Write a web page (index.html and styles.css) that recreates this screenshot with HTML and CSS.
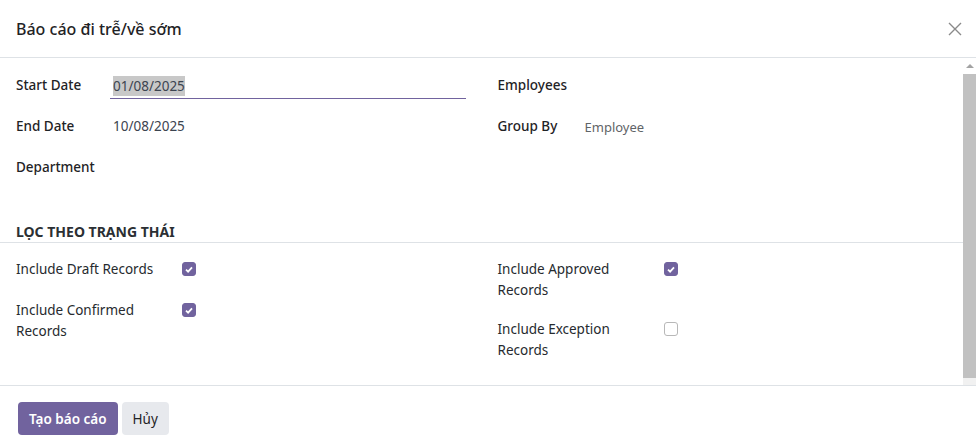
FILE: index.html
```html
<!DOCTYPE html>
<html lang="vi">
<head>
<meta charset="utf-8">
<title>Báo cáo đi trễ/về sớm</title>
<link rel="stylesheet" href="styles.css">
</head>
<body>
<div class="modal">
  <header class="modal-header">
    <h4 class="modal-title">Báo cáo đi trễ/về sớm</h4>
    <button class="btn-close" aria-label="Close">
      <svg width="14" height="14" viewBox="0 0 14 14"><path d="M1 1L13 13M13 1L1 13" stroke="#8a8a8a" stroke-width="1.4" fill="none"/></svg>
    </button>
  </header>
  <div class="modal-main">
    <div class="modal-body">
      <div class="group-grid">
        <div class="group">
          <div class="row">
            <label class="lbl lbl-left">Start Date</label>
            <div class="field field-input"><span class="selected">01/08/2025</span></div>
          </div>
          <div class="row">
            <label class="lbl lbl-left">End Date</label>
            <div class="field field-value">10/08/2025</div>
          </div>
          <div class="row">
            <label class="lbl lbl-left">Department</label>
            <div class="field"></div>
          </div>
        </div>
        <div class="group">
          <div class="row">
            <label class="lbl lbl-right">Employees</label>
            <div class="field"></div>
          </div>
          <div class="row">
            <label class="lbl lbl-right">Group By</label>
            <div class="field field-muted">Employee</div>
          </div>
        </div>
      </div>
      <div class="separator">LỌC THEO TRẠNG THÁI</div>
      <div class="group-grid">
        <div class="group checks checks-left">
          <div class="crow">
            <label class="clbl">Include Draft Records</label>
            <span class="cb on"><svg width="8" height="7" viewBox="0 0 8 7"><path d="M1 3.6L3.1 5.6L7 1.4" stroke="#fff" stroke-width="1.8" fill="none"/></svg></span>
          </div>
          <div class="crow">
            <label class="clbl">Include Confirmed Records</label>
            <span class="cb on"><svg width="8" height="7" viewBox="0 0 8 7"><path d="M1 3.6L3.1 5.6L7 1.4" stroke="#fff" stroke-width="1.8" fill="none"/></svg></span>
          </div>
        </div>
        <div class="group checks checks-right">
          <div class="crow">
            <label class="clbl">Include Approved Records</label>
            <span class="cb on"><svg width="8" height="7" viewBox="0 0 8 7"><path d="M1 3.6L3.1 5.6L7 1.4" stroke="#fff" stroke-width="1.8" fill="none"/></svg></span>
          </div>
          <div class="crow">
            <label class="clbl">Include Exception Records</label>
            <span class="cb"></span>
          </div>
        </div>
      </div>
    </div>
    <div class="scrollbar">
      <div class="sb-arrow"></div>
      <div class="sb-thumb"></div>
      <div class="sb-track"></div>
    </div>
  </div>
  <footer class="modal-footer">
    <button class="btn btn-primary">Tạo báo cáo</button>
    <button class="btn btn-secondary">Hủy</button>
  </footer>
</div>
</body>
</html>
```

FILE: styles.css
```css
* { box-sizing: border-box; }
html, body { margin: 0; padding: 0; background: #fff; }
body {
  font-family: "Noto Sans", "Open Sans", sans-serif;
  font-size: 13.5px;
  color: #262a2e;
}
.modal { width: 976px; height: 448px; display: flex; flex-direction: column; overflow: hidden; }
.modal-header {
  flex: 0 0 58px;
  border-bottom: 1px solid #dee2e6;
  display: flex;
  align-items: center;
  justify-content: space-between;
  padding: 0 14px 0 16px;
}
.modal-title { margin: 0; font-size: 16px; font-weight: 500; color: #1f2326; }
.btn-close { background: none; border: 0; padding: 0; width: 14px; height: 14px; display: flex; }
.modal-main { flex: 0 0 328px; display: flex; border-bottom: 1px solid #dee2e6; }
.modal-body { flex: 1; padding: 17px 16px 0 16px; }
.group-grid { display: grid; grid-template-columns: 1fr 1fr; column-gap: 32px; }
.group { display: flex; flex-direction: column; gap: 16px; }
.row { display: flex; height: 25px; }
.lbl { line-height: 21px; font-weight: 500; color: #1f2326; }
.lbl-left { width: 94px; }
.lbl-right { width: 87px; }
.field { flex: 1; line-height: 21px; }
.field-input { border-bottom: 1px solid #71639e; padding: 0 3px; height: 25px; display: flex; align-items: center; margin-top: -1px; }
.selected { background: #c8c8c8; line-height: 20px; color: #3c4450; }
.field-value { padding-left: 3px; color: #3c4450; }
.field-muted { color: #5f6468; font-size: 13px; padding-top: 1px; }
.separator {
  margin: 39px -16px 16px -16px;
  padding: 0 16px;
  line-height: 21px;
  font-weight: 700;
  font-size: 14px;
  color: #2b2f33;
  border-bottom: 1px solid #dee2e6;
}
.checks-left { gap: 19px; }
.checks-right { gap: 18px; }
.crow { display: flex; min-height: 22px; align-items: flex-start; }
.clbl { width: 166px; line-height: 21px; padding-right: 20px; color: #262a2e; }
.cb {
  width: 14px; height: 14px; margin-top: 3px;
  border-radius: 3px;
  border: 1px solid #b8b8b8;
  background: #fff;
  display: flex; align-items: center; justify-content: center;
}
.cb.on { background: #71639e; border-color: #71639e; }
.scrollbar { width: 13px; display: flex; flex-direction: column; background: #fff; }
.sb-arrow {
  width: 0; height: 0; margin: 6px auto 6px auto;
  border-left: 4px solid transparent;
  border-right: 4px solid transparent;
  border-bottom: 4px solid #a3a3a3;
}
.sb-thumb { flex: 1; background: #c1c1c1; }
.sb-track { height: 7px; background: #f1f1f1; }
.modal-footer { flex: 1; display: flex; align-items: flex-start; gap: 4px; padding: 16px 18px 0; }
.btn {
  font-family: inherit;
  font-size: 13.5px;
  height: 33px;
  border: 0;
  border-radius: 4px;
  padding: 0 11px;
}
.btn-primary { background: #71639e; color: #fff; font-weight: 600; }
.btn-secondary { background: #e7e9ed; color: #1f2326; }
```
